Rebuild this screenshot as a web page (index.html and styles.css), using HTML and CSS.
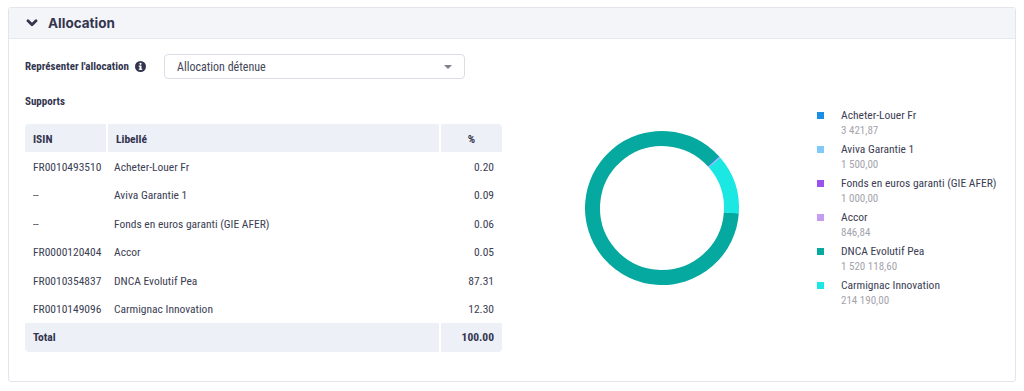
FILE: index.html
```html
<!DOCTYPE html>
<html lang="fr">
<head>
<meta charset="utf-8">
<title>Allocation</title>
<link rel="stylesheet" href="styles.css">
</head>
<body>
<section class="card">
  <header class="card-head">
    <svg class="chevron" width="12" height="8" viewBox="0 0 12 8"><path d="M2 1.8 L6 5.8 L10 1.8" fill="none" stroke="#33354f" stroke-width="2.8" stroke-linecap="round" stroke-linejoin="round"/></svg>
    <h2 class="card-title">Allocation</h2>
  </header>
  <div class="card-body">
    <div class="field-row">
      <label class="field-label">Représenter l'allocation
        <svg class="info" width="11" height="11" viewBox="0 0 10 10"><circle cx="5" cy="5" r="5" fill="#33354f"/><rect x="4.1" y="4.2" width="1.8" height="3.8" fill="#fff"/><rect x="3.4" y="4.2" width="1.5" height="1" fill="#fff"/><rect x="3.4" y="7.1" width="3.2" height="0.9" fill="#fff"/><circle cx="5" cy="2.6" r="1" fill="#fff"/></svg>
      </label>
      <div class="select">
        <span>Allocation détenue</span>
        <span class="caret"></span>
      </div>
    </div>
    <div class="content">
      <div class="left">
        <div class="section-label">Supports</div>
        <table class="grid">
          <thead>
            <tr><th class="c-isin">ISIN</th><th class="c-lib">Libellé</th><th class="c-pct">%</th></tr>
          </thead>
          <tbody>
            <tr><td>FR0010493510</td><td>Acheter-Louer Fr</td><td class="num">0.20</td></tr>
            <tr><td>--</td><td>Aviva Garantie 1</td><td class="num">0.09</td></tr>
            <tr><td>--</td><td>Fonds en euros garanti (GIE AFER)</td><td class="num">0.06</td></tr>
            <tr><td>FR0000120404</td><td>Accor</td><td class="num">0.05</td></tr>
            <tr><td>FR0010354837</td><td>DNCA Evolutif Pea</td><td class="num">87.31</td></tr>
            <tr><td>FR0010149096</td><td>Carmignac Innovation</td><td class="num">12.30</td></tr>
          </tbody>
          <tfoot>
            <tr><td colspan="2">Total</td><td class="num">100.00</td></tr>
          </tfoot>
        </table>
      </div>
      <div class="right">
        <svg class="donut" width="160" height="160" viewBox="0 0 160 160">
          <g fill="none" stroke-width="15">
            <circle cx="80" cy="80" r="69.5" stroke="#05a99f" stroke-dasharray="380.28 436.68" transform="rotate(4 80 80)"/>
            <circle cx="80" cy="80" r="69.5" stroke="#1be8e3" stroke-dasharray="54.59 436.68" transform="rotate(-41 80 80)"/>
            <circle cx="80" cy="80" r="69.5" stroke="#1a8fe3" stroke-dasharray="0.87 436.68" transform="rotate(-42.5 80 80)"/>
            <circle cx="80" cy="80" r="69.5" stroke="#80c9f9" stroke-dasharray="0.39 436.68" transform="rotate(-41.78 80 80)"/>
            <circle cx="80" cy="80" r="69.5" stroke="#9a52ef" stroke-dasharray="0.27 436.68" transform="rotate(-41.46 80 80)"/>
            <circle cx="80" cy="80" r="69.5" stroke="#c49cf2" stroke-dasharray="0.22 436.68" transform="rotate(-41.24 80 80)"/>
          </g>
        </svg>
        <ul class="legend">
          <li><span class="sw sw-1"></span><div><div class="lg-name">Acheter-Louer Fr</div><div class="lg-val">3 421,87</div></div></li>
          <li><span class="sw sw-2"></span><div><div class="lg-name">Aviva Garantie 1</div><div class="lg-val">1 500,00</div></div></li>
          <li><span class="sw sw-3"></span><div><div class="lg-name">Fonds en euros garanti (GIE AFER)</div><div class="lg-val">1 000,00</div></div></li>
          <li><span class="sw sw-4"></span><div><div class="lg-name">Accor</div><div class="lg-val">846,84</div></div></li>
          <li><span class="sw sw-5"></span><div><div class="lg-name">DNCA Evolutif Pea</div><div class="lg-val">1 520 118,60</div></div></li>
          <li><span class="sw sw-6"></span><div><div class="lg-name">Carmignac Innovation</div><div class="lg-val">214 190,00</div></div></li>
        </ul>
      </div>
    </div>
  </div>
</section>
</body>
</html>
```
FILE: styles.css
```css
* { box-sizing: border-box; }
html, body { margin: 0; background: #fff; }
body {
  padding: 7px 8px;
  font-family: "Liberation Sans Narrow", "Roboto Condensed", Roboto, sans-serif;
  font-size: 11.5px;
  color: #3c3e54;
}
.card {
  border: 1px solid #e3e5ee;
  border-radius: 3px;
  height: 375px;
  background: #fff;
}
.card-head {
  height: 31px;
  background: #f4f5f9;
  border-bottom: 1px solid #e6e8f0;
  display: flex;
  align-items: center;
  padding-left: 17px;
}
.chevron { display: block; }
.card-title {
  margin: 0 0 0 10px;
  font-family: Inter, "Noto Sans", sans-serif;
  font-weight: 700;
  font-size: 13.5px;
  color: #33354f;
}
.card-body { padding: 15px 0 0 16px; }
.field-row { display: flex; align-items: center; height: 25px; }
.field-label {
  width: 139px;
  font-weight: 700;
  font-size: 11px;
  color: #33354f;
  display: flex;
  align-items: center;
  gap: 6px;
}
.info { display: block; }
.select {
  width: 301px;
  height: 25px;
  border: 1px solid #dcdee6;
  border-radius: 4px;
  display: flex;
  align-items: center;
  justify-content: space-between;
  padding: 0 12px 0 12px;
  font-size: 12px;
  color: #44465a;
}
.caret {
  width: 0; height: 0;
  border-left: 4px solid transparent;
  border-right: 4px solid transparent;
  border-top: 4px solid #7d7f8a;
}
.content { display: flex; }
.left { width: 477px; }
.section-label {
  font-weight: 700;
  font-size: 11px;
  color: #33354f;
  margin-top: 16px;
  height: 29px;
}
.grid {
  width: 477px;
  border-collapse: separate;
  border-spacing: 0;
  table-layout: fixed;
}
.grid th, .grid td {
  height: 28.5px;
  padding: 1px 8px 0;
  text-align: left;
  white-space: nowrap;
}
.grid thead th, .grid tfoot td {
  background: #edf0f7;
  font-weight: 700;
  color: #33354f;
}
.grid thead th { height: 28px; }
.grid tbody td { padding-top: 1px; }
.grid tfoot td { padding-top: 0; }
.grid thead th + th, .grid tfoot td + td { border-left: 2px solid #fff; }
.grid thead th:first-child { border-top-left-radius: 4px; }
.grid thead th:last-child { border-top-right-radius: 4px; }
.grid tfoot td:first-child { border-bottom-left-radius: 4px; }
.grid tfoot td:last-child { border-bottom-right-radius: 4px; }
.c-isin { width: 81px; }
.c-pct { width: 63px; }
.grid th.c-pct { text-align: center; }
.grid .num { text-align: right; }
.right {
  flex: 1;
  display: flex;
  align-items: center;
  height: 230px;
  margin-top: 14px;
}
.donut { display: block; margin-left: 80px; }
.legend {
  list-style: none;
  margin: 3px 0 0 75px;
  padding: 0;
}
.legend li {
  display: flex;
  align-items: flex-start;
  height: 34px;
}
.sw {
  width: 7px; height: 7px;
  margin: 4px 17px 0 0;
  flex: none;
}
.sw-1 { background: #1a8fe3; }
.sw-2 { background: #80c9f9; }
.sw-3 { background: #9a52ef; }
.sw-4 { background: #c49cf2; }
.sw-5 { background: #05a99f; }
.sw-6 { background: #1be8e3; }
.lg-name { font-size: 11.5px; color: #3c3e54; line-height: 15px; }
.lg-val { font-size: 11px; color: #a3a4ad; line-height: 16px; }
```
